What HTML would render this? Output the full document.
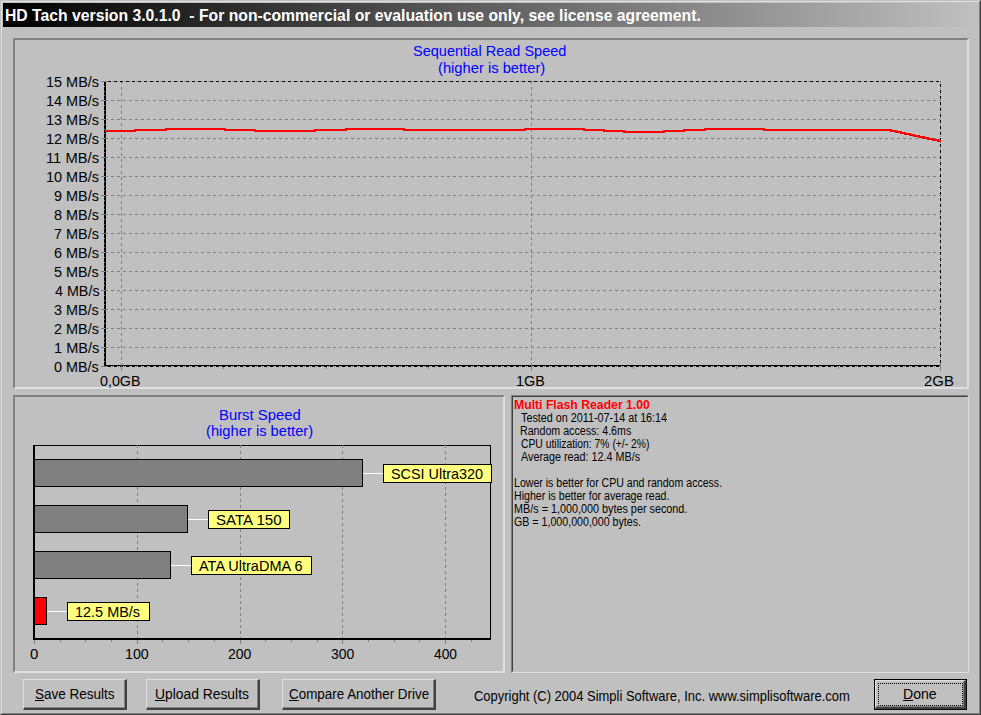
<!DOCTYPE html>
<html><head><meta charset="utf-8">
<style>
html,body{margin:0;padding:0;}
body{width:981px;height:715px;overflow:hidden;background:#c0c0c0;position:relative;font-family:"Liberation Sans",sans-serif;}
.a{position:absolute;box-sizing:border-box;}
.t{position:absolute;white-space:nowrap;line-height:1;transform-origin:0 0;}
u{text-underline-offset:1px;}
.panel{position:absolute;box-sizing:border-box;border:2px solid;border-color:#808080 #dfdfdf #dfdfdf #808080;}
.btn{position:absolute;box-sizing:border-box;border-style:solid;border-width:1px 2px 2px 1px;border-color:#dfdfdf #404040 #404040 #dfdfdf;box-shadow:inset -1px -1px 0 #808080;}
svg{position:absolute;left:0;top:0;}
</style></head>
<body>
<div class="a" style="left:0;top:0;width:981px;height:715px;border-style:solid;border-width:1px;border-color:#c0c0c0 #404040 #404040 #c0c0c0;"></div>
<div class="a" style="left:1px;top:1px;width:979px;height:713px;border-style:solid;border-width:1px;border-color:#dfdfdf #808080 #808080 #dfdfdf;"></div>
<div class="a" style="left:3px;top:3px;width:975px;height:24px;background:linear-gradient(to right,#000000,#c0c0c0);"></div>
<div class="panel" style="left:13px;top:38px;width:956px;height:351px;"></div>
<div class="panel" style="left:13px;top:395px;width:492px;height:278px;"></div>
<div class="a" style="left:511px;top:395px;width:458px;height:278px;border-style:solid;border-width:1px;border-color:#808080 #dfdfdf #dfdfdf #808080;"></div>
<div class="a" style="left:512px;top:396px;width:456px;height:276px;border-style:solid;border-width:1px;border-color:#404040 #c0c0c0 #c0c0c0 #404040;"></div>
<svg width="981" height="715" shape-rendering="crispEdges"><line x1="105" y1="100.5" x2="940" y2="100.5" stroke="#808080" stroke-width="1" stroke-dasharray="3 3" stroke-dashoffset="0"/>
<line x1="105" y1="119.5" x2="940" y2="119.5" stroke="#808080" stroke-width="1" stroke-dasharray="3 3" stroke-dashoffset="0"/>
<line x1="105" y1="138.5" x2="940" y2="138.5" stroke="#808080" stroke-width="1" stroke-dasharray="3 3" stroke-dashoffset="0"/>
<line x1="105" y1="157.5" x2="940" y2="157.5" stroke="#808080" stroke-width="1" stroke-dasharray="3 3" stroke-dashoffset="0"/>
<line x1="105" y1="176.5" x2="940" y2="176.5" stroke="#808080" stroke-width="1" stroke-dasharray="3 3" stroke-dashoffset="0"/>
<line x1="105" y1="195.5" x2="940" y2="195.5" stroke="#808080" stroke-width="1" stroke-dasharray="3 3" stroke-dashoffset="0"/>
<line x1="105" y1="214.5" x2="940" y2="214.5" stroke="#808080" stroke-width="1" stroke-dasharray="3 3" stroke-dashoffset="0"/>
<line x1="105" y1="233.5" x2="940" y2="233.5" stroke="#808080" stroke-width="1" stroke-dasharray="3 3" stroke-dashoffset="0"/>
<line x1="105" y1="252.5" x2="940" y2="252.5" stroke="#808080" stroke-width="1" stroke-dasharray="3 3" stroke-dashoffset="0"/>
<line x1="105" y1="271.5" x2="940" y2="271.5" stroke="#808080" stroke-width="1" stroke-dasharray="3 3" stroke-dashoffset="0"/>
<line x1="105" y1="290.5" x2="940" y2="290.5" stroke="#808080" stroke-width="1" stroke-dasharray="3 3" stroke-dashoffset="0"/>
<line x1="105" y1="309.5" x2="940" y2="309.5" stroke="#808080" stroke-width="1" stroke-dasharray="3 3" stroke-dashoffset="0"/>
<line x1="105" y1="328.5" x2="940" y2="328.5" stroke="#808080" stroke-width="1" stroke-dasharray="3 3" stroke-dashoffset="0"/>
<line x1="105" y1="347.5" x2="940" y2="347.5" stroke="#808080" stroke-width="1" stroke-dasharray="3 3" stroke-dashoffset="0"/>
<line x1="121.5" y1="81" x2="121.5" y2="365" stroke="#808080" stroke-width="1" stroke-dasharray="3 3" stroke-dashoffset="0"/>
<line x1="531.5" y1="81" x2="531.5" y2="365" stroke="#808080" stroke-width="1" stroke-dasharray="3 3" stroke-dashoffset="0"/>
<line x1="104" y1="81.5" x2="941" y2="81.5" stroke="#000" stroke-width="1" stroke-dasharray="3 3" stroke-dashoffset="2"/>
<line x1="104" y1="81.5" x2="941" y2="81.5" stroke="#808080" stroke-width="1" stroke-dasharray="1 5" stroke-dashoffset="4"/>
<line x1="940.5" y1="81" x2="940.5" y2="367" stroke="#000" stroke-width="1" stroke-dasharray="3 3" stroke-dashoffset="3"/>
<line x1="940.5" y1="81" x2="940.5" y2="367" stroke="#808080" stroke-width="1" stroke-dasharray="1 5" stroke-dashoffset="5"/>
<rect x="104" y="81" width="2" height="286" fill="#000"/>
<rect x="104" y="365" width="837" height="1" fill="#000"/>
<line x1="104" y1="366.5" x2="941" y2="366.5" stroke="#000" stroke-width="1" stroke-dasharray="3 3" stroke-dashoffset="2"/>
<line x1="104" y1="366.5" x2="941" y2="366.5" stroke="#808080" stroke-width="1" stroke-dasharray="1 5" stroke-dashoffset="4"/>
<line x1="101" y1="81.5" x2="108" y2="81.5" stroke="#808080" stroke-width="1"/>
<rect x="104" y="86" width="1" height="1" fill="#808080"/>
<rect x="104" y="91" width="1" height="1" fill="#808080"/>
<rect x="104" y="95" width="1" height="1" fill="#808080"/>
<line x1="101" y1="100.5" x2="108" y2="100.5" stroke="#808080" stroke-width="1"/>
<rect x="104" y="105" width="1" height="1" fill="#808080"/>
<rect x="104" y="110" width="1" height="1" fill="#808080"/>
<rect x="104" y="114" width="1" height="1" fill="#808080"/>
<line x1="101" y1="119.5" x2="108" y2="119.5" stroke="#808080" stroke-width="1"/>
<rect x="104" y="124" width="1" height="1" fill="#808080"/>
<rect x="104" y="129" width="1" height="1" fill="#808080"/>
<rect x="104" y="133" width="1" height="1" fill="#808080"/>
<line x1="101" y1="138.5" x2="108" y2="138.5" stroke="#808080" stroke-width="1"/>
<rect x="104" y="143" width="1" height="1" fill="#808080"/>
<rect x="104" y="148" width="1" height="1" fill="#808080"/>
<rect x="104" y="152" width="1" height="1" fill="#808080"/>
<line x1="101" y1="157.5" x2="108" y2="157.5" stroke="#808080" stroke-width="1"/>
<rect x="104" y="162" width="1" height="1" fill="#808080"/>
<rect x="104" y="167" width="1" height="1" fill="#808080"/>
<rect x="104" y="171" width="1" height="1" fill="#808080"/>
<line x1="101" y1="176.5" x2="108" y2="176.5" stroke="#808080" stroke-width="1"/>
<rect x="104" y="181" width="1" height="1" fill="#808080"/>
<rect x="104" y="186" width="1" height="1" fill="#808080"/>
<rect x="104" y="190" width="1" height="1" fill="#808080"/>
<line x1="101" y1="195.5" x2="108" y2="195.5" stroke="#808080" stroke-width="1"/>
<rect x="104" y="200" width="1" height="1" fill="#808080"/>
<rect x="104" y="205" width="1" height="1" fill="#808080"/>
<rect x="104" y="209" width="1" height="1" fill="#808080"/>
<line x1="101" y1="214.5" x2="108" y2="214.5" stroke="#808080" stroke-width="1"/>
<rect x="104" y="219" width="1" height="1" fill="#808080"/>
<rect x="104" y="224" width="1" height="1" fill="#808080"/>
<rect x="104" y="228" width="1" height="1" fill="#808080"/>
<line x1="101" y1="233.5" x2="108" y2="233.5" stroke="#808080" stroke-width="1"/>
<rect x="104" y="238" width="1" height="1" fill="#808080"/>
<rect x="104" y="243" width="1" height="1" fill="#808080"/>
<rect x="104" y="247" width="1" height="1" fill="#808080"/>
<line x1="101" y1="252.5" x2="108" y2="252.5" stroke="#808080" stroke-width="1"/>
<rect x="104" y="257" width="1" height="1" fill="#808080"/>
<rect x="104" y="262" width="1" height="1" fill="#808080"/>
<rect x="104" y="266" width="1" height="1" fill="#808080"/>
<line x1="101" y1="271.5" x2="108" y2="271.5" stroke="#808080" stroke-width="1"/>
<rect x="104" y="276" width="1" height="1" fill="#808080"/>
<rect x="104" y="281" width="1" height="1" fill="#808080"/>
<rect x="104" y="285" width="1" height="1" fill="#808080"/>
<line x1="101" y1="290.5" x2="108" y2="290.5" stroke="#808080" stroke-width="1"/>
<rect x="104" y="295" width="1" height="1" fill="#808080"/>
<rect x="104" y="300" width="1" height="1" fill="#808080"/>
<rect x="104" y="304" width="1" height="1" fill="#808080"/>
<line x1="101" y1="309.5" x2="108" y2="309.5" stroke="#808080" stroke-width="1"/>
<rect x="104" y="314" width="1" height="1" fill="#808080"/>
<rect x="104" y="319" width="1" height="1" fill="#808080"/>
<rect x="104" y="323" width="1" height="1" fill="#808080"/>
<line x1="101" y1="328.5" x2="108" y2="328.5" stroke="#808080" stroke-width="1"/>
<rect x="104" y="333" width="1" height="1" fill="#808080"/>
<rect x="104" y="338" width="1" height="1" fill="#808080"/>
<rect x="104" y="342" width="1" height="1" fill="#808080"/>
<line x1="101" y1="347.5" x2="108" y2="347.5" stroke="#808080" stroke-width="1"/>
<rect x="104" y="352" width="1" height="1" fill="#808080"/>
<rect x="104" y="357" width="1" height="1" fill="#808080"/>
<rect x="104" y="361" width="1" height="1" fill="#808080"/>
<line x1="101" y1="366.5" x2="108" y2="366.5" stroke="#808080" stroke-width="1"/>
<line x1="121.5" y1="363" x2="121.5" y2="371" stroke="#808080" stroke-width="1"/>
<line x1="531.5" y1="363" x2="531.5" y2="371" stroke="#808080" stroke-width="1"/>
<line x1="940.5" y1="363" x2="940.5" y2="371" stroke="#808080" stroke-width="1"/>
<line x1="223.5" y1="367" x2="223.5" y2="369" stroke="#808080" stroke-width="1"/>
<line x1="326.5" y1="367" x2="326.5" y2="369" stroke="#808080" stroke-width="1"/>
<line x1="428.5" y1="367" x2="428.5" y2="369" stroke="#808080" stroke-width="1"/>
<line x1="633.5" y1="367" x2="633.5" y2="369" stroke="#808080" stroke-width="1"/>
<line x1="736.5" y1="367" x2="736.5" y2="369" stroke="#808080" stroke-width="1"/>
<line x1="838.5" y1="367" x2="838.5" y2="369" stroke="#808080" stroke-width="1"/>
<path d="M106,131 L135,131 L135,130 L166,130 L166,129 L225,129 L225,130 L255,130 L255,131 L315,131 L315,130 L346,130 L346,129 L404,129 L404,130 L525,130 L525,129 L584,129 L584,130 L604,130 L604,131 L624,131 L624,132 L664,132 L664,131 L684,131 L684,130 L705,130 L705,129 L764,129 L764,130 L889,130 L891,130 L891,131 L896,131 L896,132 L901,132 L901,133 L905,133 L905,134 L910,134 L910,135 L914,135 L914,136 L919,136 L919,137 L924,137 L924,138 L928,138 L928,139 L933,139 L933,140 L938,140 L938,141 L940,141" fill="none" stroke="#ff0000" stroke-width="2" stroke-linecap="square"/>
<line x1="34.5" y1="640" x2="34.5" y2="644" stroke="#808080" stroke-width="1"/>
<line x1="60.5" y1="640" x2="60.5" y2="642" stroke="#808080" stroke-width="1"/>
<line x1="85.5" y1="640" x2="85.5" y2="642" stroke="#808080" stroke-width="1"/>
<line x1="111.5" y1="640" x2="111.5" y2="642" stroke="#808080" stroke-width="1"/>
<line x1="137.5" y1="640" x2="137.5" y2="644" stroke="#808080" stroke-width="1"/>
<line x1="162.5" y1="640" x2="162.5" y2="642" stroke="#808080" stroke-width="1"/>
<line x1="188.5" y1="640" x2="188.5" y2="642" stroke="#808080" stroke-width="1"/>
<line x1="214.5" y1="640" x2="214.5" y2="642" stroke="#808080" stroke-width="1"/>
<line x1="240.5" y1="640" x2="240.5" y2="644" stroke="#808080" stroke-width="1"/>
<line x1="265.5" y1="640" x2="265.5" y2="642" stroke="#808080" stroke-width="1"/>
<line x1="291.5" y1="640" x2="291.5" y2="642" stroke="#808080" stroke-width="1"/>
<line x1="317.5" y1="640" x2="317.5" y2="642" stroke="#808080" stroke-width="1"/>
<line x1="342.5" y1="640" x2="342.5" y2="644" stroke="#808080" stroke-width="1"/>
<line x1="368.5" y1="640" x2="368.5" y2="642" stroke="#808080" stroke-width="1"/>
<line x1="394.5" y1="640" x2="394.5" y2="642" stroke="#808080" stroke-width="1"/>
<line x1="419.5" y1="640" x2="419.5" y2="642" stroke="#808080" stroke-width="1"/>
<line x1="445.5" y1="640" x2="445.5" y2="644" stroke="#808080" stroke-width="1"/>
<line x1="471.5" y1="640" x2="471.5" y2="642" stroke="#808080" stroke-width="1"/>
<line x1="33" y1="445.5" x2="491" y2="445.5" stroke="#000" stroke-width="1"/>
<line x1="490.5" y1="445" x2="490.5" y2="640" stroke="#000" stroke-width="1"/>
<rect x="33" y="445" width="2" height="195" fill="#000"/>
<rect x="33" y="638" width="458" height="2" fill="#000"/>
<line x1="137.5" y1="445" x2="137.5" y2="638" stroke="#808080" stroke-width="1" stroke-dasharray="3 3" stroke-dashoffset="0"/>
<line x1="240.5" y1="445" x2="240.5" y2="638" stroke="#808080" stroke-width="1" stroke-dasharray="3 3" stroke-dashoffset="0"/>
<line x1="342.5" y1="445" x2="342.5" y2="638" stroke="#808080" stroke-width="1" stroke-dasharray="3 3" stroke-dashoffset="0"/>
<line x1="445.5" y1="445" x2="445.5" y2="638" stroke="#808080" stroke-width="1" stroke-dasharray="3 3" stroke-dashoffset="0"/>
<rect x="34.5" y="459.5" width="328" height="27" fill="#808080" stroke="#000" stroke-width="1"/>
<line x1="363" y1="473.5" x2="383" y2="473.5" stroke="#ffffff" stroke-width="1"/>
<rect x="383.5" y="464.5" width="108" height="18" fill="#ffff80" stroke="#000" stroke-width="1"/>
<rect x="34.5" y="505.5" width="153" height="27" fill="#808080" stroke="#000" stroke-width="1"/>
<line x1="188" y1="519.5" x2="208" y2="519.5" stroke="#ffffff" stroke-width="1"/>
<rect x="208.5" y="510.5" width="81" height="18" fill="#ffff80" stroke="#000" stroke-width="1"/>
<rect x="34.5" y="551.5" width="136" height="27" fill="#808080" stroke="#000" stroke-width="1"/>
<line x1="171" y1="565.5" x2="191" y2="565.5" stroke="#ffffff" stroke-width="1"/>
<rect x="191.5" y="556.5" width="120" height="18" fill="#ffff80" stroke="#000" stroke-width="1"/>
<rect x="34.5" y="597.5" width="12" height="27" fill="#ff0000" stroke="#000" stroke-width="1"/>
<line x1="47" y1="611.5" x2="67" y2="611.5" stroke="#ffffff" stroke-width="1"/>
<rect x="67.5" y="602.5" width="82" height="18" fill="#ffff80" stroke="#000" stroke-width="1"/></svg>
<div class="t" style="left:4.98px;top:7.79px;font-size:15.6px;font-weight:bold;color:#fff;transform:scale(1.0095,1.0);">HD Tach version 3.0.1.0&nbsp; - For non-commercial or evaluation use only, see license agreement.</div>
<div class="t" style="left:413.15px;top:43.81px;font-size:14.4px;color:#0000ff;transform:scale(1.0090,1.0);">Sequential Read Speed</div>
<div class="t" style="left:437.62px;top:60.81px;font-size:14.4px;color:#0000ff;transform:scale(1.0232,1.0);">(higher is better)</div>
<div class="t" style="left:218.71px;top:407.81px;font-size:14.4px;color:#0000ff;transform:scale(1.0310,1.0);">Burst Speed</div>
<div class="t" style="left:205.72px;top:424.31px;font-size:14.4px;color:#0000ff;transform:scale(1.0223,1.0);">(higher is better)</div>
<div class="t" style="left:46.02px;top:75.48px;font-size:14.2px;color:#000;transform:scale(1.0188,1.0);">15 MB/s</div>
<div class="t" style="left:46.02px;top:94.48px;font-size:14.2px;color:#000;transform:scale(1.0188,1.0);">14 MB/s</div>
<div class="t" style="left:46.02px;top:113.48px;font-size:14.2px;color:#000;transform:scale(1.0188,1.0);">13 MB/s</div>
<div class="t" style="left:46.02px;top:132.48px;font-size:14.2px;color:#000;transform:scale(1.0188,1.0);">12 MB/s</div>
<div class="t" style="left:45.99px;top:151.48px;font-size:14.2px;color:#000;transform:scale(1.0407,1.0);">11 MB/s</div>
<div class="t" style="left:46.02px;top:170.48px;font-size:14.2px;color:#000;transform:scale(1.0188,1.0);">10 MB/s</div>
<div class="t" style="left:54.25px;top:189.48px;font-size:14.2px;color:#000;transform:scale(1.0157,1.0);">9 MB/s</div>
<div class="t" style="left:54.25px;top:208.48px;font-size:14.2px;color:#000;transform:scale(1.0157,1.0);">8 MB/s</div>
<div class="t" style="left:54.18px;top:227.48px;font-size:14.2px;color:#000;transform:scale(1.0173,1.0);">7 MB/s</div>
<div class="t" style="left:54.18px;top:246.48px;font-size:14.2px;color:#000;transform:scale(1.0173,1.0);">6 MB/s</div>
<div class="t" style="left:54.32px;top:265.48px;font-size:14.2px;color:#000;transform:scale(1.0140,1.0);">5 MB/s</div>
<div class="t" style="left:54.54px;top:284.48px;font-size:14.2px;color:#000;transform:scale(1.0090,1.0);">4 MB/s</div>
<div class="t" style="left:54.32px;top:303.48px;font-size:14.2px;color:#000;transform:scale(1.0140,1.0);">3 MB/s</div>
<div class="t" style="left:54.18px;top:322.48px;font-size:14.2px;color:#000;transform:scale(1.0173,1.0);">2 MB/s</div>
<div class="t" style="left:53.81px;top:341.48px;font-size:14.2px;color:#000;transform:scale(1.0258,1.0);">1 MB/s</div>
<div class="t" style="left:54.32px;top:360.48px;font-size:14.2px;color:#000;transform:scale(1.0140,1.0);">0 MB/s</div>
<div class="t" style="left:99.93px;top:373.98px;font-size:14.2px;color:#000;transform:scale(1.0057,1.0);">0,0GB</div>
<div class="t" style="left:516.12px;top:373.98px;font-size:14.2px;color:#000;transform:scale(1.0141,1.0);">1GB</div>
<div class="t" style="left:924.25px;top:373.98px;font-size:14.2px;color:#000;transform:scale(1.0526,1.0);">2GB</div>
<div class="t" style="left:30.15px;top:647.48px;font-size:14.2px;color:#000;transform:scale(1.0526,1.0);">0</div>
<div class="t" style="left:125.18px;top:647.48px;font-size:14.2px;color:#000;transform:scale(1.0041,1.0);">100</div>
<div class="t" style="left:228.25px;top:647.48px;font-size:14.2px;color:#000;transform:scale(0.9882,1.0);">200</div>
<div class="t" style="left:330.89px;top:647.48px;font-size:14.2px;color:#000;transform:scale(0.9819,1.0);">300</div>
<div class="t" style="left:433.90px;top:647.48px;font-size:14.2px;color:#000;transform:scale(0.9727,1.0);">400</div>
<div class="t" style="left:391.05px;top:466.98px;font-size:14.2px;color:#000;transform:scale(1.0142,1.0);">SCSI Ultra320</div>
<div class="t" style="left:215.72px;top:512.98px;font-size:14.2px;color:#000;transform:scale(1.0621,1.0);">SATA 150</div>
<div class="t" style="left:199.43px;top:558.98px;font-size:14.2px;color:#000;transform:scale(1.0225,1.0);">ATA UltraDMA 6</div>
<div class="t" style="left:75.32px;top:604.98px;font-size:14.2px;color:#000;transform:scale(1.0186,1.0);">12.5 MB/s</div>
<div class="t" style="left:514.11px;top:398.59px;font-size:12.3px;font-weight:bold;color:#ff0000;transform:scale(0.9939,1.0);">Multi Flash Reader 1.00</div>
<div class="t" style="left:521.03px;top:411.84px;font-size:12px;color:#000;transform:scale(0.8988,1.0);">Tested on 2011-07-14 at 16:14</div>
<div class="t" style="left:520.45px;top:424.84px;font-size:12px;color:#000;transform:scale(0.8870,1.0);">Random access: 4.6ms</div>
<div class="t" style="left:520.78px;top:437.84px;font-size:12px;color:#000;transform:scale(0.8618,1.0);">CPU utilization: 7% (+/- 2%)</div>
<div class="t" style="left:521.25px;top:450.84px;font-size:12px;color:#000;transform:scale(0.8988,1.0);">Average read: 12.4 MB/s</div>
<div class="t" style="left:513.65px;top:476.84px;font-size:12px;color:#000;transform:scale(0.8814,1.0);">Lower is better for CPU and random access.</div>
<div class="t" style="left:513.65px;top:489.84px;font-size:12px;color:#000;transform:scale(0.8828,1.0);">Higher is better for average read.</div>
<div class="t" style="left:513.64px;top:502.84px;font-size:12px;color:#000;transform:scale(0.9008,1.0);">MB/s = 1,000,000 bytes per second.</div>
<div class="t" style="left:513.97px;top:515.84px;font-size:12px;color:#000;transform:scale(0.8874,1.0);">GB = 1,000,000,000 bytes.</div>
<div class="btn" style="left:23px;top:679px;width:104px;height:31px;"></div>
<div class="btn" style="left:146px;top:679px;width:114px;height:31px;"></div>
<div class="btn" style="left:282px;top:679px;width:154px;height:31px;"></div>
<div class="a" style="left:874px;top:679px;width:93px;height:31px;border:1px solid #000;"></div>
<div class="btn" style="left:875px;top:680px;width:91px;height:29px;"></div>
<div class="a" style="left:878px;top:683px;width:85px;height:23px;border:1px dotted #000;"></div>
<div class="t" style="left:34.99px;top:688.32px;font-size:13.8px;color:#000;transform:scale(0.9791,1.0);"><u>S</u>ave Results</div>
<div class="t" style="left:154.96px;top:688.32px;font-size:13.8px;color:#000;transform:scale(1.0038,1.0);"><u>U</u>pload Results</div>
<div class="t" style="left:288.83px;top:688.32px;font-size:13.8px;color:#000;transform:scale(0.9720,1.0);"><u>C</u>ompare Another Drive</div>
<div class="t" style="left:903.47px;top:688.32px;font-size:13.8px;color:#000;transform:scale(1.0206,1.0);"><u>D</u>one</div>
<div class="t" style="left:474.35px;top:689.82px;font-size:13.8px;color:#000;transform:scale(0.9388,1.0);">Copyright (C) 2004 Simpli Software, Inc. www.simplisoftware.com</div>
</body></html>
